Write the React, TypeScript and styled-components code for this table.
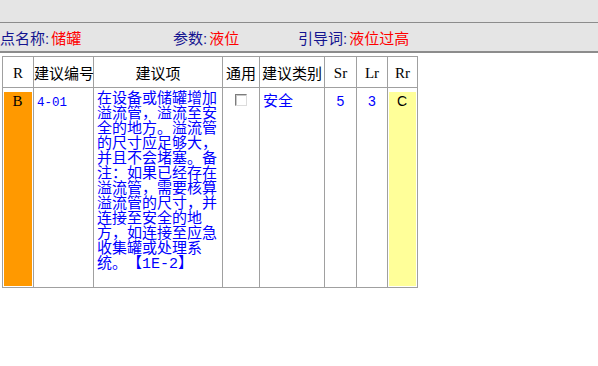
import React from 'react'
import styled, { createGlobalStyle } from 'styled-components'

const GlobalStyle = createGlobalStyle`
  body {
    margin: 0;
    background: #ffffff;
    font-family: "Noto Sans CJK SC", sans-serif;
  }
`

const Page = styled.div`
  width: 598px;
  height: 366px;
  overflow: hidden;
  background: #ffffff;
`

const TopBar = styled.div`
  height: 22px;
  background: #e5e5e5;
  border-bottom: 1px solid #8c8c8c;
`

const InfoBar = styled.div`
  display: grid;
  grid-template-columns: 173px 125px auto;
  align-items: center;
  height: 30px;
  padding-top: 2px;
  box-sizing: border-box;
  background: #e5e5e5;
  border-bottom: 2px solid #8c8c8c;
  font-family: "Liberation Sans", "Noto Sans CJK SC", sans-serif;
  font-size: 15px;
  line-height: 15px;
  white-space: nowrap;
`

const InfoLabel = styled.span`
  color: #141490;
`

const InfoValue = styled.span`
  color: #ff0000;
  margin-left: 2px;
`

const TableWrap = styled.div`
  padding: 3px 0 0 2px;
`

const Grid = styled.table`
  border-collapse: collapse;
  table-layout: fixed;
  width: 416px;
  border: 1px solid #a0a0a0;
  font-family: "Noto Sans CJK SC", sans-serif;
  font-size: 15px;
  line-height: 15px;
  text-spacing-trim: space-all;
`

const Head = styled.th`
  height: 30px;
  padding: 0;
  border: 1px solid #a0a0a0;
  font-weight: normal;
  color: #000000;
  text-align: center;
  vertical-align: middle;
  white-space: nowrap;
`

const Cell = styled.td<{ $align?: string; $mono?: boolean }>`
  height: 195px;
  padding: 4px 3px 0 3px;
  border: 1px solid #a0a0a0;
  color: #0000ff;
  font-family: ${p =>
    p.$mono
      ? '"Liberation Mono", "Noto Sans CJK SC", monospace'
      : '"Noto Sans CJK SC", sans-serif'};
  text-align: ${p => p.$align || 'left'};
  vertical-align: top;
  word-break: normal;
  line-break: strict;
`

const RankCell = styled.td<{ $fill: string }>`
  padding: 4px 2px 2px 1px;
  border: 1px solid #a0a0a0;
  background: ${p => p.$fill};
  background-clip: content-box;
  color: #000000;
  text-align: center;
  vertical-align: top;
`

const Serif = styled.span`
  font-family: "Liberation Serif", serif;
  font-size: 15px;
`

const Half = styled.span`
  font-family: "Liberation Mono", monospace;
  font-size: 12.5px;
  line-height: 15px;
`

const Num = styled.span`
  font-family: "Liberation Sans", sans-serif;
  font-size: 14px;
`

const Check = styled.span`
  display: inline-block;
  width: 10px;
  height: 10px;
  margin-top: 1px;
  background: #ffffff;
  border: 1px solid;
  border-color: #7c7c7c #dcdcdc #dcdcdc #7c7c7c;
  box-shadow: inset 1px 1px 0 #c8c8c8;
`

const widths = [31, 60, 129, 37, 65, 32, 31, 30]

const App: React.FC = () => {
  return (
    <Page>
      <GlobalStyle />
      <TopBar />
      <InfoBar>
        <div>
          <InfoLabel>点名称:</InfoLabel>
          <InfoValue>储罐</InfoValue>
        </div>
        <div>
          <InfoLabel>参数:</InfoLabel>
          <InfoValue>液位</InfoValue>
        </div>
        <div>
          <InfoLabel>引导词:</InfoLabel>
          <InfoValue>液位过高</InfoValue>
        </div>
      </InfoBar>
      <TableWrap>
        <Grid>
          <colgroup>
            {widths.map((w, i) => (
              <col key={i} style={{ width: w }} />
            ))}
          </colgroup>
          <thead>
            <tr>
              <Head>
                <Serif>R</Serif>
              </Head>
              <Head>建议编号</Head>
              <Head>建议项</Head>
              <Head>通用</Head>
              <Head>建议类别</Head>
              <Head>
                <Serif>Sr</Serif>
              </Head>
              <Head>
                <Serif>Lr</Serif>
              </Head>
              <Head>
                <Serif>Rr</Serif>
              </Head>
            </tr>
          </thead>
          <tbody>
            <tr>
              <RankCell $fill="#ff9900">
                <Serif>B</Serif>
              </RankCell>
              <Cell>
                <Half>4-01</Half>
              </Cell>
              <Cell $mono>
                在设备或储罐增加溢流管，溢流至安全的地方。溢流管的尺寸应足够大，并且不会堵塞。备注：如果已经存在溢流管，需要核算溢流管的尺寸，并连接至安全的地方，如连接至应急收集罐或处理系统。【1E-2】
              </Cell>
              <Cell $align="center">
                <Check />
              </Cell>
              <Cell>安全</Cell>
              <Cell $align="center">
                <Num>5</Num>
              </Cell>
              <Cell $align="center">
                <Num>3</Num>
              </Cell>
              <RankCell $fill="#ffff99">
                <Num>C</Num>
              </RankCell>
            </tr>
          </tbody>
        </Grid>
      </TableWrap>
    </Page>
  )
}

export default App
